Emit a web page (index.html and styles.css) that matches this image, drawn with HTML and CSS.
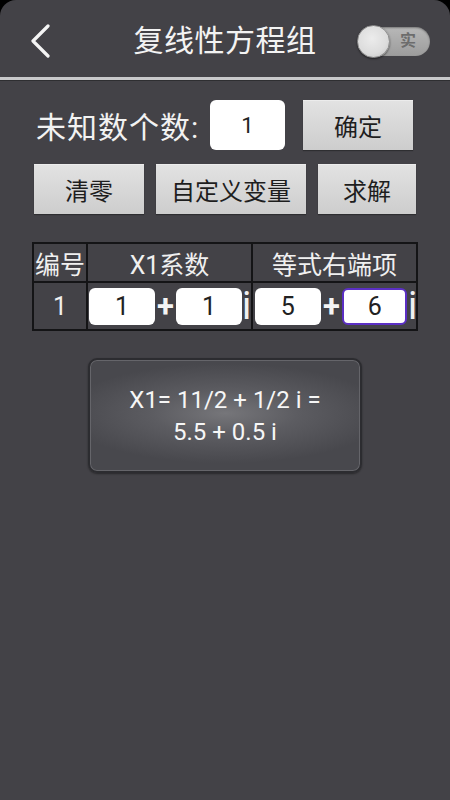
FILE: index.html
```html
<!DOCTYPE html>
<html lang="zh">
<head>
<meta charset="utf-8">
<title>复线性方程组</title>
<link rel="stylesheet" href="styles.css">
</head>
<body>
<div class="app">
  <header class="topbar">
    <div class="back">
      <svg width="20" height="34" viewBox="0 0 20 34"><path d="M17 2 L2 17 L17 32" fill="none" stroke="#f4f4f4" stroke-width="3.2" stroke-linecap="round" stroke-linejoin="round"/></svg>
    </div>
    <h1 class="title">复线性方程组</h1>
    <div class="toggle">
      <span class="knob"></span>
      <span class="toggle-text">实</span>
    </div>
  </header>
  <div class="divider"></div>
  <main class="content">
    <div class="row-count">
      <span class="label">未知数个数:</span>
      <div class="field">1</div>
      <button class="btn btn-confirm">确定</button>
    </div>
    <div class="row-actions">
      <button class="btn btn-clear">清零</button>
      <button class="btn btn-custom">自定义变量</button>
      <button class="btn btn-solve">求解</button>
    </div>
    <div class="grid">
      <div class="cell head">编号</div>
      <div class="cell head">X1系数</div>
      <div class="cell head">等式右端项</div>
      <div class="cell num">1</div>
      <div class="cell pair pair-a">
        <div class="box">1</div><span class="plus">+</span><div class="box">1</div><span class="imag">i</span>
      </div>
      <div class="cell pair pair-b">
        <div class="box">5</div><span class="plus">+</span><div class="box box-focus">6</div><span class="imag">i</span>
      </div>
    </div>
    <div class="result">
      <p class="result-line">X1= 11/2 + 1/2 i =</p>
      <p class="result-line">5.5 + 0.5 i</p>
    </div>
  </main>
</div>
</body>
</html>
```
FILE: styles.css
```css
html, body {
  margin: 0;
  padding: 0;
  background: #000;
}
body {
  font-family: "Roboto", "Noto Sans CJK SC", "Noto Sans", sans-serif;
  color: #f2f2f2;
}
.app {
  width: 450px;
  min-height: 800px;
  background: #434247;
  border-radius: 16px 16px 0 0;
  overflow: hidden;
}
.topbar {
  height: 72px;
  padding-top: 5px;
  display: grid;
  grid-template-columns: 1fr auto 1fr;
  align-items: center;
}
.back {
  padding-left: 31px;
  display: flex;
  align-items: center;
}
.back svg { display: block; }
.title {
  margin: 0;
  font-size: 30px;
  font-weight: 400;
  color: #f3f3f3;
  letter-spacing: 0.5px;
  line-height: 40px;
}
.toggle {
  justify-self: end;
  margin-right: 20px;
  position: relative;
  width: 72px;
  height: 29px;
  border-radius: 15px;
  background: linear-gradient(#b8b8b8, #9c9c9c);
  box-shadow: inset 0 1px 2px rgba(0,0,0,0.35);
  display: flex;
  align-items: center;
  justify-content: flex-end;
}
.knob {
  position: absolute;
  left: -1px;
  top: -2px;
  width: 31px;
  height: 31px;
  border-radius: 50%;
  background: radial-gradient(circle at 45% 40%, #ececec 0%, #dcdcdc 60%, #bdbdbd 100%);
  border: 1px solid #8e8e8e;
  box-shadow: 0 1px 2px rgba(0,0,0,0.5);
}
.toggle-text {
  font-size: 16px;
  font-weight: 700;
  color: #6c6c6c;
  margin-right: 14px;
  line-height: 1;
}
.divider {
  height: 3px;
  background: #c9c9cb;
  border-bottom: 1px solid #2e2e31;
}
.content {
  padding-top: 19px;
}
.row-count {
  display: flex;
  align-items: center;
  height: 50px;
  padding-left: 36px;
}
.label {
  width: 174px;
  font-size: 30px;
  letter-spacing: 1px;
  color: #f2f2f2;
  white-space: nowrap;
}
.field {
  width: 75px;
  height: 50px;
  background: #fff;
  border-radius: 6px;
  color: #222;
  font-size: 22px;
  display: flex;
  align-items: center;
  justify-content: center;
}
.btn {
  height: 50px;
  border: none;
  padding: 0;
  margin: 0;
  font-family: "Roboto", "Noto Sans CJK SC", sans-serif;
  font-size: 24px;
  color: #1e1e1e;
  background: linear-gradient(#e2e2e2, #cdcdcd);
  border-top: 1px solid #ececec;
  box-shadow: 0 1px 1px rgba(0,0,0,0.3);
}
.btn-confirm {
  width: 110px;
  margin-left: 18px;
}
.row-actions {
  display: flex;
  gap: 12px;
  padding-left: 34px;
  margin-top: 14px;
}
.btn-clear { width: 110px; }
.btn-custom { width: 150px; }
.btn-solve { width: 98px; }
.grid {
  margin: 28px 0 0 32px;
  width: 382px;
  padding: 2px;
  gap: 2px;
  background: #141416;
  display: grid;
  grid-template-columns: 52px 163px 163px;
  grid-template-rows: 37px 46px;
}
.cell {
  background: #434247;
  display: flex;
  align-items: center;
  justify-content: center;
  color: #f0f0f0;
}
.head {
  font-size: 25px;
}
.num {
  font-size: 25px;
}
.pair {
  justify-content: flex-start;
}
.pair-a { padding-left: 1px; }
.pair-b { padding-left: 2px; }
.box {
  width: 66px;
  height: 37px;
  box-sizing: border-box;
  background: #fff;
  border-radius: 6px;
  color: #222;
  font-size: 25px;
  display: flex;
  align-items: center;
  justify-content: center;
}
.box-focus {
  width: 65px;
  border: 2px solid #5b2fc4;
}
.plus {
  width: 21px;
  text-align: center;
  font-size: 31px;
  font-weight: 700;
  color: #f4f4f4;
  line-height: 1;
}
.pair-b .plus { width: 22px; }
.imag {
  width: 8px;
  text-align: center;
  font-size: 38px;
  color: #f0f0f0;
  line-height: 44px;
  height: 44px;
}
.pair-b .imag { margin-left: 1px; }
.result {
  margin: 27px 0 0 88px;
  width: 274px;
  height: 115px;
  box-sizing: border-box;
  border-radius: 9px;
  border: 2px solid #2c2c30;
  box-shadow: inset 0 0 0 1px #65656a, 0 1px 2px rgba(0,0,0,0.4);
  background: radial-gradient(ellipse 60% 45% at 50% 48%, #76767a 0%, #5c5c61 45%, #48484d 100%);
  display: flex;
  flex-direction: column;
  align-items: center;
  justify-content: center;
}
.result-line {
  margin: 0;
  font-size: 24px;
  line-height: 32px;
  color: #f6f6f6;
}
```
